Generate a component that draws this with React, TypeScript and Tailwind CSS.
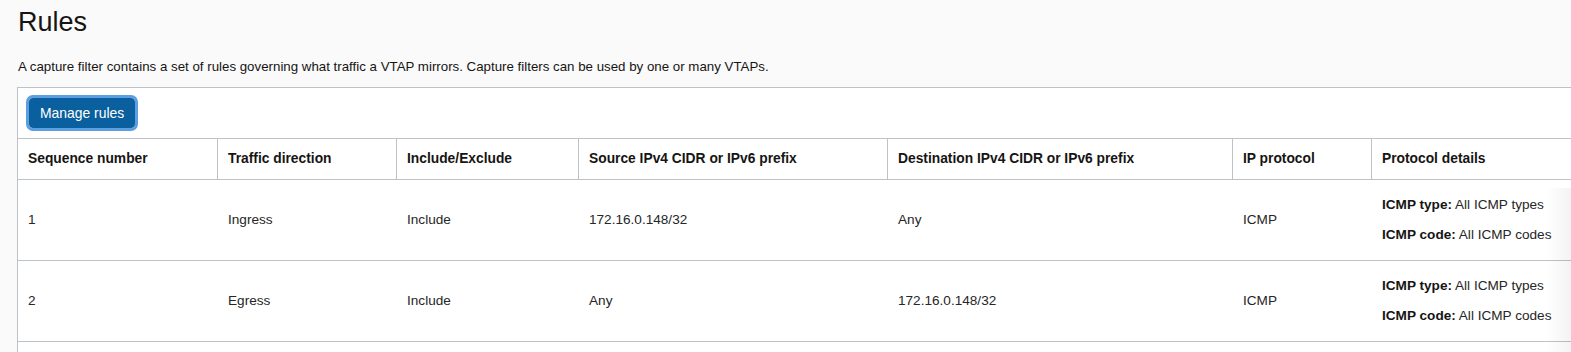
const cols = 'grid grid-cols-[200px_179px_182px_309px_345px_139px_260px]';

const headers = [
  'Sequence number',
  'Traffic direction',
  'Include/Exclude',
  'Source IPv4 CIDR or IPv6 prefix',
  'Destination IPv4 CIDR or IPv6 prefix',
  'IP protocol',
  'Protocol details',
];

const rules = [
  { seq: '1', dir: 'Ingress', inc: 'Include', src: '172.16.0.148/32', dst: 'Any', proto: 'ICMP' },
  { seq: '2', dir: 'Egress', inc: 'Include', src: 'Any', dst: '172.16.0.148/32', proto: 'ICMP' },
];

export default function App() {
  return (
    <div className="relative h-[352px] overflow-hidden bg-[#fafafa] font-['Liberation_Sans',Arial,sans-serif] text-[#161513]">
      <h1 className="ml-[18px] mt-[6px] text-[27px] leading-[32px] font-normal">Rules</h1>
      <p className="ml-[18px] mt-[19px] text-[13.3px] leading-[20px]">
        A capture filter contains a set of rules governing what traffic a VTAP mirrors. Capture filters can be used by one or many VTAPs.
      </p>

      <div className="ml-[17px] mt-[10px] w-[1615px] border-l border-t border-[#bcc2c8] bg-white">
        {/* toolbar */}
        <div className="px-[11px] py-[10px]">
          <button className="h-[30px] rounded-[4px] bg-[#0a5f9e] px-[11px] text-[13.9px] text-white outline outline-[3px] outline-offset-0 outline-[#5b9fe0]">
            Manage rules
          </button>
        </div>

        {/* header */}
        <div className={`${cols} border-t border-[#bcc2c8]`}>
          {headers.map((h) => (
            <div key={h} className="flex h-[40px] items-center border-r border-[#bcc2c8] pl-[10px] text-[13.8px] font-bold">
              {h}
            </div>
          ))}
        </div>

        {/* rows */}
        {rules.map((r) => (
          <div key={r.seq} className={`${cols} h-[81px] border-t border-[#bcc2c8] text-[13.6px] text-[#262626]`}>
            <div className="flex items-center pl-[10px]">{r.seq}</div>
            <div className="flex items-center pl-[10px]">{r.dir}</div>
            <div className="flex items-center pl-[10px]">{r.inc}</div>
            <div className="flex items-center pl-[10px]">{r.src}</div>
            <div className="flex items-center pl-[10px]">{r.dst}</div>
            <div className="flex items-center pl-[10px]">{r.proto}</div>
            <div className="flex flex-col justify-center gap-[10px] pl-[10px] leading-[20px]">
              <p>
                <span className="font-bold text-[#161513]">ICMP type:</span> All ICMP types
              </p>
              <p>
                <span className="font-bold text-[#161513]">ICMP code:</span> All ICMP codes
              </p>
            </div>
          </div>
        ))}
        <div className="h-[81px] border-t border-[#bcc2c8]" />
      </div>

      {/* right scroll shadow */}
      <div className="pointer-events-none absolute right-0 top-[188px] h-[164px] w-[24px] bg-gradient-to-r from-transparent to-black/[0.05]" />
    </div>
  );
}
